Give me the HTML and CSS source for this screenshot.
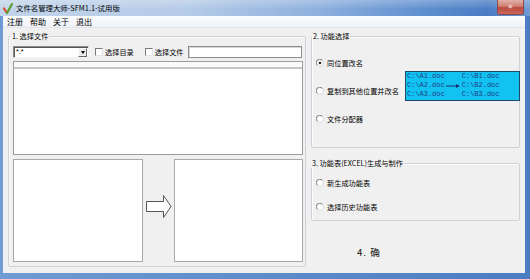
FILE: index.html
```html
<!DOCTYPE html>
<html lang="zh-CN">
<head>
<meta charset="utf-8">
<title>文件名管理大师-SFM1.1-试用版</title>
<link rel="stylesheet" href="styles.css">
</head>
<body>
<div class="window">
  <div class="titlebar">
    <svg class="app-icon" width="10" height="11" viewBox="0 0 10 11">
      <path d="M1 5.5 L4 10" stroke="#d8502a" stroke-width="2.2" fill="none" stroke-linecap="round"/>
      <path d="M4 10 L9 1" stroke="#5aa02c" stroke-width="2.2" fill="none" stroke-linecap="round"/>
    </svg>
    <span class="title">文件名管理大师-SFM1.1-试用版</span>
    <div class="close">✕</div>
  </div>
  <div class="frame">
    <div class="menubar">
      <span>注册</span><span>帮助</span><span>关于</span><span>退出</span>
    </div>
    <div class="client">
      <fieldset class="group g1">
        <legend>1. 选择文件</legend>
        <div class="toolbar">
          <div class="combo"><span class="combo-text">*.*</span><span class="drop"><i></i></span></div>
          <label class="check c1"><span class="box"></span>选择目录</label>
          <label class="check c2"><span class="box"></span>选择文件</label>
          <div class="input"></div>
        </div>
        <div class="listbox"><div class="lheader"></div></div>
        <div class="panes">
          <div class="pane"></div>
          <div class="arrow">
            <svg width="26" height="23" viewBox="0 0 26 23">
              <path d="M0.5 6.5 H17.5 V0.5 L25 11.5 L17.5 22.5 V16.5 H0.5 Z" fill="#fff" stroke="#555" stroke-width="1"/>
            </svg>
          </div>
          <div class="pane"></div>
        </div>
      </fieldset>
      <div class="right">
        <fieldset class="group g2">
          <legend>2. 功能选择</legend>
          <div class="opt">
            <svg class="radio" width="8" height="8" viewBox="0 0 8 8"><circle cx="4" cy="4" r="3.5" fill="#fff" stroke="#d8d8d8"/><path d="M1.2 6.2 A3.3 3.3 0 0 1 6.2 1.2" stroke="#7a7a7a" fill="none"/><circle cx="4" cy="4" r="1.3" fill="#222"/></svg>
            <span>同位置改名</span>
          </div>
          <div class="opt">
            <svg class="radio" width="8" height="8" viewBox="0 0 8 8"><circle cx="4" cy="4" r="3.5" fill="#fff" stroke="#d8d8d8"/><path d="M1.2 6.2 A3.3 3.3 0 0 1 6.2 1.2" stroke="#7a7a7a" fill="none"/></svg>
            <span>复制到其他位置并改名</span>
            <div class="demo">
              <div class="col">C:\A1.doc<br>C:\A2.doc<br>C:\A3.doc</div>
              <svg class="demo-arrow" width="17" height="28" viewBox="0 0 17 28">
                <path d="M2 14 H13" stroke="#1a2f70" stroke-width="1"/>
                <path d="M12 12 L16 14 L12 16 Z" fill="#1a2f70"/>
              </svg>
              <div class="col">C:\B1.doc<br>C:\B2.doc<br>C:\B3.doc</div>
            </div>
          </div>
          <div class="opt">
            <svg class="radio" width="8" height="8" viewBox="0 0 8 8"><circle cx="4" cy="4" r="3.5" fill="#fff" stroke="#d8d8d8"/><path d="M1.2 6.2 A3.3 3.3 0 0 1 6.2 1.2" stroke="#7a7a7a" fill="none"/></svg>
            <span>文件分配器</span>
          </div>
        </fieldset>
        <fieldset class="group g3">
          <legend>3. 功能表(EXCEL)生成与制作</legend>
          <div class="opt">
            <svg class="radio" width="8" height="8" viewBox="0 0 8 8"><circle cx="4" cy="4" r="3.5" fill="#fff" stroke="#d8d8d8"/><path d="M1.2 6.2 A3.3 3.3 0 0 1 6.2 1.2" stroke="#7a7a7a" fill="none"/></svg>
            <span>新生成功能表</span>
          </div>
          <div class="opt">
            <svg class="radio" width="8" height="8" viewBox="0 0 8 8"><circle cx="4" cy="4" r="3.5" fill="#fff" stroke="#d8d8d8"/><path d="M1.2 6.2 A3.3 3.3 0 0 1 6.2 1.2" stroke="#7a7a7a" fill="none"/></svg>
            <span>选择历史功能表</span>
          </div>
        </fieldset>
        <div class="okbtn">4. 确</div>
      </div>
    </div>
  </div>
</div>
</body>
</html>
```
FILE: styles.css
```css
* { box-sizing: border-box; }

body {
  margin: 0;
  width: 530px;
  height: 279px;
  overflow: hidden;
  font-family: "Noto Sans CJK SC", "Liberation Sans", sans-serif;
  font-size: 7.2px;
  color: #000;
}

.window {
  width: 530px;
  height: 279px;
  display: flex;
  flex-direction: column;
  background: linear-gradient(to right, #6f9bd2 0%, #5d8cca 50%, #4b7dc2 100%);
}

.titlebar {
  height: 16px;
  display: flex;
  align-items: center;
  padding-left: 3px;
  background:
    linear-gradient(to bottom, rgba(255,255,255,0.25), rgba(255,255,255,0) 60%),
    linear-gradient(to right, #c2d4ea 0%, #b5cbe7 35%, #8eb0de 60%, #5f8fcf 80%, #4a7cc4 92%, #6f9ad3 100%);
}

.app-icon { margin-right: 3px; flex: none; }

.title {
  font-size: 7.4px;
  line-height: 10px;
  white-space: nowrap;
}

.close {
  margin-left: auto;
  margin-right: 6px;
  align-self: flex-start;
  width: 27px;
  height: 15px;
  border: 1px solid #8a4a48;
  border-top: none;
  border-radius: 0 0 3px 3px;
  background: linear-gradient(to bottom, #e2b1aa 0%, #cf7d72 45%, #bb4a3d 55%, #c9695c 100%);
  color: #f6e6e4;
  font-size: 7px;
  line-height: 14px;
  text-align: center;
  font-family: "DejaVu Sans", sans-serif;
}

.frame {
  flex: 1;
  margin: 0 5px 6px 3px;
  display: flex;
  flex-direction: column;
  background: #f0f0f0;
}

.menubar {
  height: 12px;
  flex: none;
  display: flex;
  align-items: center;
  gap: 7px;
  padding-left: 4px;
  font-size: 8px;
  background: linear-gradient(to bottom, #fbfcfe, #eef2f7);
  border-bottom: 1px solid #e2e6ec;
}

.client {
  flex: 1;
  display: flex;
  gap: 5px;
  padding: 4px 5px 6px 5px;
}

.group {
  margin: 0;
  border: 1px solid #cdd3d9;
  border-radius: 2px;
  box-shadow: inset 1px 1px 0 #fbfbfb;
  min-width: 0;
}

.group legend {
  padding: 0 1px;
  line-height: 9px;
  font-size: 7.2px;
}

.g1 {
  width: 298px;
  padding: 5px 2px 4px 4px;
  display: flex;
  flex-direction: column;
}
.g1 legend { margin-left: -2px; }

.toolbar {
  height: 12px;
  display: flex;
  align-items: center;
  flex: none;
}

.combo {
  width: 76px;
  height: 12px;
  display: flex;
  align-items: stretch;
  border: 1px solid;
  border-color: #8a8a8a #f4f4f4 #f4f4f4 #8a8a8a;
  background: #fff;
  box-shadow: inset 1px 1px 0 #555;
}
.combo-text {
  flex: 1;
  padding-left: 2px;
  font-family: "Liberation Sans", sans-serif;
  font-size: 7px;
  line-height: 10px;
}
.drop {
  width: 9px;
  margin: 1px 1px 0 0;
  background: #ececec;
  border: 1px solid;
  border-color: #fafafa #6a6a6a #6a6a6a #fafafa;
  display: flex;
  align-items: center;
  justify-content: center;
}
.drop i {
  width: 0;
  height: 0;
  border-left: 2.5px solid transparent;
  border-right: 2.5px solid transparent;
  border-top: 3px solid #000;
}

.check {
  display: flex;
  align-items: center;
  gap: 2px;
  white-space: nowrap;
}
.c1 { margin-left: 6px; }
.c2 { margin-left: 11px; }
.box {
  width: 8px;
  height: 8px;
  background: #fff;
  border: 1px solid;
  border-color: #7a7a7a #e6e6e6 #e6e6e6 #7a7a7a;
}

.input {
  flex: 1;
  height: 12px;
  margin-left: 4px;
  margin-right: 1px;
  background: #fff;
  border: 1px solid #8c8c8c;
  box-shadow: inset 1px 1px 0 #d8d8d8;
}

.listbox {
  height: 94px;
  margin-top: 3px;
  flex: none;
  background: #fff;
  border: 1px solid #9c9c9c;
}
.lheader {
  height: 7px;
  border-bottom: 2px solid #c6c6c6;
  background: #fafafa;
}

.panes {
  flex: 1;
  margin-top: 4px;
  display: grid;
  grid-template-columns: 130px 1fr 129px;
}
.pane {
  background: #fff;
  border: 1px solid #a9a9a9;
}
.arrow {
  display: flex;
  align-items: center;
  justify-content: center;
  padding-bottom: 8px;
}

.right {
  width: 209px;
  display: flex;
  flex-direction: column;
}

.g2 {
  padding: 8px 2px 14px 4px;
  display: grid;
  grid-template-rows: 28px 28px 28px;
}
.g2 legend { margin-left: -4px; }

.opt {
  display: flex;
  align-items: center;
  gap: 3px;
  white-space: nowrap;
}
.radio { flex: none; }

.demo {
  margin-left: 3px;
  margin-bottom: 11px;
  width: 115px;
  height: 30px;
  display: flex;
  background: #12c3f1;
  border: 1px solid #1f4a63;
  font-family: "Liberation Mono", monospace;
  font-size: 7px;
  line-height: 9.33px;
  color: #1f3b86;
  padding-left: 0;
}
.demo .col { padding-left: 1px; }
.demo-arrow { flex: none; margin-left: -1px; }

.g3 {
  margin-top: 11px;
  padding: 3px 2px 1px 4px;
  display: grid;
  grid-template-rows: 24px 24px;
}
.g3 legend { margin-left: -5px; }

.okbtn {
  flex: 1;
  margin-top: 6px;
  display: flex;
  align-items: center;
  padding: 10px 0 0 46px;
  font-size: 9.6px;
  letter-spacing: 1px;
  color: #111;
}
```
